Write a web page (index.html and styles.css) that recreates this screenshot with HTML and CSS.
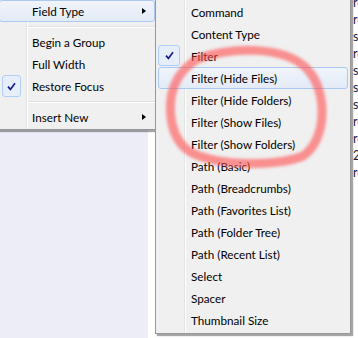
FILE: index.html
```html
<!DOCTYPE html>
<html lang="en">
<head>
  <meta charset="UTF-8">
  <title>Field Type menu</title>
  <link rel="stylesheet" href="styles.css">
</head>
<body>
  <div class="app">
    <div class="side-pane"></div>
    <div class="main-pane">
      <div class="code-col">
        <div>ro</div><div>ro</div><div>so</div><div>ro</div><div>so</div><div>so</div>
        <div>so</div><div>ro</div><div>ro</div><div>20</div><div>ro</div>
      </div>
    </div>
  </div>

  <!-- context menu -->
  <div class="menu menu-main">
    <div class="item hover has-sub">Field Type<span class="arrow"></span></div>
    <div class="sep"></div>
    <div class="item">Begin a Group</div>
    <div class="item">Full Width</div>
    <div class="item checked">
      <span class="check"><svg width="9" height="9" viewBox="0 0 9 9"><path d="M1 4.6 L3.4 7.4 L8 1.2" fill="none" stroke="#141a8c" stroke-width="1.7"/></svg></span>
      Restore Focus
    </div>
    <div class="sep"></div>
    <div class="item has-sub">Insert New<span class="arrow"></span></div>
  </div>

  <!-- submenu -->
  <div class="menu menu-sub">
    <div class="item">Command</div>
    <div class="item">Content Type</div>
    <div class="item checked">
      <span class="check"><svg width="9" height="9" viewBox="0 0 9 9"><path d="M1 4.6 L3.4 7.4 L8 1.2" fill="none" stroke="#141a8c" stroke-width="1.7"/></svg></span>
      Filter
    </div>
    <div class="item hover">Filter (Hide Files)</div>
    <div class="item">Filter (Hide Folders)</div>
    <div class="item">Filter (Show Files)</div>
    <div class="item">Filter (Show Folders)</div>
    <div class="item">Path (Basic)</div>
    <div class="item">Path (Breadcrumbs)</div>
    <div class="item">Path (Favorites List)</div>
    <div class="item">Path (Folder Tree)</div>
    <div class="item">Path (Recent List)</div>
    <div class="item">Select</div>
    <div class="item">Spacer</div>
    <div class="item">Thumbnail Size</div>
  </div>

  <!-- hand-drawn annotation -->
  <svg class="scribble" width="358" height="338" viewBox="0 0 358 338">
    <defs>
      <filter id="soft"><feGaussianBlur stdDeviation="1.4"/></filter>
    </defs>
    <path d="M196 60 C225 47 285 44 308 70 C328 92 327 140 303 156 C275 168 205 166 185 148 C168 132 166 98 178 78 C183 70 188 65 196 60"
          fill="none" stroke="#ff5050" stroke-opacity="0.6" stroke-width="9" stroke-linecap="round" filter="url(#soft)"/>
  </svg>
</body>
</html>
```

FILE: styles.css
```css
body {
  margin: 0;
  width: 358px;
  height: 338px;
  overflow: hidden;
  position: relative;
  font-family: Lato, "Noto Sans", Arial, sans-serif;
  font-size: 11.7px;
  color: #000;
  background: #fff;
}
.app {
  display: flex;
  height: 338px;
}
.side-pane {
  width: 148px;
  background: #ecedf6;
}
.main-pane {
  flex: 1;
  display: flex;
  justify-content: flex-end;
  overflow: hidden;
}
.code-col {
  width: 5px;
  margin-top: -6px;
  overflow: hidden;
  line-height: 17px;
  font-size: 12.5px;
  color: #2b1a33;
  white-space: nowrap;
}

.menu {
  position: absolute;
  box-sizing: border-box;
  background-color: #f0f0f0;
  border: 1px solid #979797;
  padding: 2px;
  box-shadow: 2px 2px 1px rgba(0, 0, 0, 0.35);
}
.menu-main {
  left: -4px;
  top: -3px;
  width: 162px;
  padding-bottom: 1px;
  background-image: linear-gradient(to right, transparent 29px, #e2e3e3 29px, #e2e3e3 30px, #fff 30px, #fff 31px, transparent 31px);
  z-index: 1;
}
.menu-sub {
  left: 155px;
  top: -2px;
  width: 196px;
  background-image: linear-gradient(to right, transparent 28px, #e2e3e3 28px, #e2e3e3 29px, #fff 29px, #fff 30px, transparent 30px);
  z-index: 2;
}

.item {
  position: relative;
  box-sizing: border-box;
  height: 22px;
  line-height: 21px;
  padding-left: 32px;
  border: 1px solid transparent;
  border-radius: 3px;
  white-space: nowrap;
}
.item.hover {
  border-color: #a9c9f1;
  background: linear-gradient(to bottom, #f0f4fa, #e3ebf7);
}
.check {
  position: absolute;
  left: -1px;
  top: -1px;
  width: 22px;
  height: 21px;
  box-sizing: border-box;
  border: 1px solid #aecff7;
  border-radius: 3px;
  background: #e6eefa;
  display: flex;
  align-items: center;
  justify-content: center;
}
.menu-main .check {
  left: 2px;
  width: 19px;
  height: 22px;
}
.arrow {
  position: absolute;
  right: 8px;
  top: 7px;
  width: 0;
  height: 0;
  border-top: 3.5px solid transparent;
  border-bottom: 3.5px solid transparent;
  border-left: 4px solid #000;
}
.sep {
  height: 9px;
  margin-left: 29px;
  background: linear-gradient(to bottom, transparent 4px, #e0e0e0 4px, #e0e0e0 5px, #fff 5px, #fff 6px, transparent 6px);
}

.scribble {
  position: absolute;
  left: 0;
  top: 0;
  z-index: 3;
  pointer-events: none;
}
```
